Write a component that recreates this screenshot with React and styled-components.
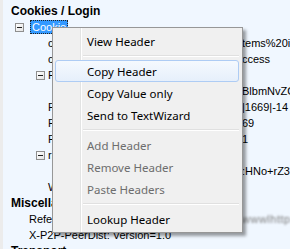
import React from 'react'
import styled, { createGlobalStyle } from 'styled-components'

const GlobalStyle = createGlobalStyle`
    html, body {
        margin: 0;
        padding: 0;
        width: 290px;
        height: 249px;
        overflow: hidden;
        background: #f0f7ff;
    }
`

const Panel = styled.div`
    position: relative;
    width: 290px;
    height: 249px;
    overflow: hidden;
    background: #f0f7ff;
    border-left: 3px solid #ececec;
    box-sizing: border-box;
    font-family: 'Liberation Sans', Arial, sans-serif;
    font-size: 11px;
    color: #000;
`

const Tree = styled.div`
    padding-top: 3px;
    margin-left: -3px;
`

const Row = styled.div`
    display: flex;
    align-items: center;
    height: 16px;
    padding-left: ${(p) => p.indent}px;
    white-space: nowrap;
`

const Group = styled.span`
    font-weight: bold;
    font-size: 12px;
`

const Toggle = styled.span`
    position: relative;
    width: 7px;
    height: 7px;
    flex: none;
    margin-right: ${(p) => p.gap}px;
    border: 1px solid #8f8f8f;
    background: linear-gradient(135deg, #ffffff, #e4e4e4);

    &::after {
        content: '';
        position: absolute;
        left: 1px;
        top: 3px;
        width: 5px;
        height: 1px;
        background: #1f1f1f;
    }
`

const Selected = styled.span`
    display: inline-flex;
    align-items: center;
    height: 14px;
    padding: 0 2px;
    background: #3399ff;
    color: #fff;
    outline: 1px dotted #222;
    outline-offset: -1px;
`

const Tail = styled.span`
    margin-left: auto;
    width: 48px;
    overflow: hidden;
`

const Blur = styled.span`
    margin-left: auto;
    width: 48px;
    overflow: hidden;
    color: #7d7d7d;
    filter: blur(1.3px);
    letter-spacing: 0.5px;
`

const Menu = styled.div`
    position: absolute;
    left: 49px;
    top: 27px;
    width: 184px;
    padding: 2px 3px 2px 2px;
    border: 1px solid #979797;
    background: linear-gradient(
        to right,
        #f0f0f0 0 27px,
        #e2e3e3 27px 28px,
        #ffffff 28px 29px,
        #f0f0f0 29px
    );
    box-shadow: 3px 3px 3px rgba(0, 0, 0, 0.38);
    font-family: 'Noto Sans', 'Open Sans', sans-serif;
    font-size: 11.5px;
`

const Item = styled.div`
    display: flex;
    align-items: center;
    height: 22px;
    box-sizing: border-box;
    padding-left: 31px;
    border-radius: 3px;
    color: ${(p) => (p.disabled ? '#6d6d6d' : '#000')};
    border: 1px solid ${(p) => (p.active ? '#aeccf4' : 'transparent')};
    background: ${(p) =>
        p.active ? 'linear-gradient(#f5f9fe, #e6effb)' : 'transparent'};
`

const Separator = styled.div`
    height: 8px;
    margin-left: 28px;
    display: flex;
    flex-direction: column;
    justify-content: center;

    &::before {
        content: '';
        height: 1px;
        background: #e0e0e0;
    }
    &::after {
        content: '';
        height: 1px;
        background: #ffffff;
    }
`

const rows = [
    { indent: 11, group: 'Cookies / Login' },
    { indent: 15, toggle: 6, selected: 'Cookie' },
    { indent: 48, text: 'cookieItems', tail: 'tems%20in' },
    { indent: 48, text: 'cookieAccess', tail: 'ccess' },
    { indent: 36, toggle: 3, text: 'FPID' },
    { indent: 48, tail: 'BlbmNvZGl' },
    { indent: 48, text: 'FCNEC', tail: '|1669|-14' },
    { indent: 48, text: 'FCCDCF', tail: '69' },
    { indent: 48, text: 'FPLC', tail: '1' },
    { indent: 36, toggle: 3, text: 'rid' },
    { indent: 48, tail: ':HNo+rZ3r' },
    { indent: 48, text: 'WMF' },
    { indent: 11, group: 'Miscellaneous' },
    { indent: 29, text: 'Referer', blur: 'wwwlhttpsme' },
    { indent: 29, text: 'X-P2P-PeerDist: Version=1.0' },
    { indent: 11, group: 'Transport' },
]

const menu = [
    { label: 'View Header' },
    { sep: true },
    { label: 'Copy Header', active: true },
    { label: 'Copy Value only' },
    { label: 'Send to TextWizard' },
    { sep: true },
    { label: 'Add Header', disabled: true },
    { label: 'Remove Header', disabled: true },
    { label: 'Paste Headers', disabled: true },
    { sep: true },
    { label: 'Lookup Header' },
]

const App = () => {
    return (
        <>
            <GlobalStyle />
            <Panel>
                <Tree>
                    {rows.map((r, i) => (
                        <Row key={i} indent={r.indent}>
                            {r.toggle && <Toggle gap={r.toggle} />}
                            {r.group && <Group>{r.group}</Group>}
                            {r.selected && <Selected>{r.selected}</Selected>}
                            {r.text && <span>{r.text}</span>}
                            {r.tail && <Tail>{r.tail}</Tail>}
                            {r.blur && <Blur>{r.blur}</Blur>}
                        </Row>
                    ))}
                </Tree>
                <Menu>
                    {menu.map((m, i) =>
                        m.sep ? (
                            <Separator key={i} />
                        ) : (
                            <Item key={i} active={m.active} disabled={m.disabled}>
                                {m.label}
                            </Item>
                        )
                    )}
                </Menu>
            </Panel>
        </>
    )
}

export default App
